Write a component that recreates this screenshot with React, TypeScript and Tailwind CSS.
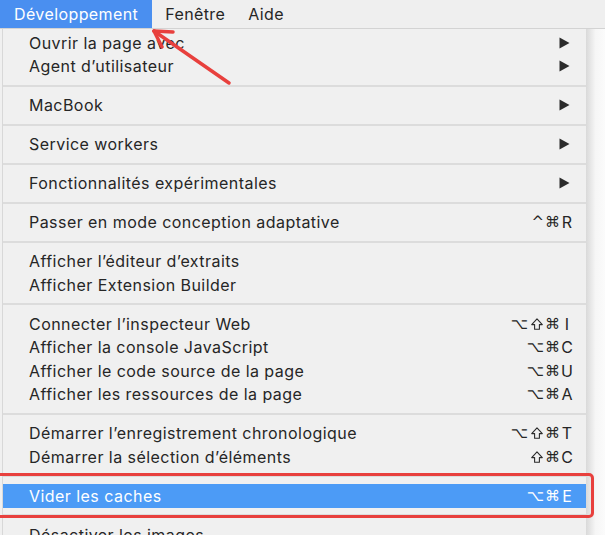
import React from "react";

type Item =
  | { type: "item"; label: string; mods?: string; keyc?: string; submenu?: boolean; active?: boolean }
  | { type: "sep" };

const items: Item[] = [
  { type: "item", label: "Ouvrir la page avec", submenu: true },
  { type: "item", label: "Agent d’utilisateur", submenu: true },
  { type: "sep" },
  { type: "item", label: "MacBook", submenu: true },
  { type: "sep" },
  { type: "item", label: "Service workers", submenu: true },
  { type: "sep" },
  { type: "item", label: "Fonctionnalités expérimentales", submenu: true },
  { type: "sep" },
  { type: "item", label: "Passer en mode conception adaptative", mods: "^⌘", keyc: "R" },
  { type: "sep" },
  { type: "item", label: "Afficher l’éditeur d’extraits" },
  { type: "item", label: "Afficher Extension Builder" },
  { type: "sep" },
  { type: "item", label: "Connecter l’inspecteur Web", mods: "⌥⇧⌘", keyc: "I" },
  { type: "item", label: "Afficher la console JavaScript", mods: "⌥⌘", keyc: "C" },
  { type: "item", label: "Afficher le code source de la page", mods: "⌥⌘", keyc: "U" },
  { type: "item", label: "Afficher les ressources de la page", mods: "⌥⌘", keyc: "A" },
  { type: "sep" },
  { type: "item", label: "Démarrer l’enregistrement chronologique", mods: "⌥⇧⌘", keyc: "T" },
  { type: "item", label: "Démarrer la sélection d’éléments", mods: "⇧⌘", keyc: "C" },
  { type: "sep" },
  { type: "item", label: "Vider les caches", mods: "⌥⌘", keyc: "E", active: true },
  { type: "sep" },
  { type: "item", label: "Désactiver les images" },
];

function Triangle() {
  return (
    <svg width="11" height="12" viewBox="0 0 11 12" className="block">
      <polygon points="0.5,0.5 10.5,6 0.5,11.5" fill="#2b2b2b" />
    </svg>
  );
}

function Shift({ color }: { color: string }) {
  return (
    <svg width="14" height="14" viewBox="0 0 14 14" className="mx-[1px] inline-block">
      <path
        d="M7 1.8 L12.3 7.6 H9.4 V12.3 H4.6 V7.6 H1.7 Z"
        fill="none"
        stroke={color}
        strokeWidth="1.1"
        strokeLinejoin="round"
      />
    </svg>
  );
}

function Shortcut({ mods, keyc, active }: { mods: string; keyc: string; active?: boolean }) {
  const color = active ? "#ffffff" : "#2a2a2a";
  return (
    <span
      className="flex items-center tracking-[1px]"
      style={{ fontFamily: "'DejaVu Sans', Inter, sans-serif", fontSize: "15px" }}
    >
      {mods.split("").map((m, i) =>
        m === "⇧" ? <Shift key={i} color={color} /> : <span key={i}>{m}</span>
      )}
      <span
        className="inline-block w-[12px] text-center tracking-normal"
        style={{ fontFamily: "Inter, sans-serif", fontSize: "16px" }}
      >
        {keyc}
      </span>
    </span>
  );
}

export default function App() {
  return (
    <div
      className="relative w-[605px] h-[535px] overflow-hidden bg-[#f0f0f0] text-[#262626]"
      style={{ fontFamily: "Inter, 'Noto Sans', sans-serif" }}
    >
      {/* Menu bar */}
      <div className="flex h-[29px] items-stretch border-b border-[#d3d3d3] bg-[#efefef] text-[16px] tracking-[0.4px]">
        <div className="flex items-center bg-[#4a8ff0] pl-[14px] pr-[14px] text-white">Développement</div>
        <div className="flex items-center pl-[13px] pr-[11px]">Fenêtre</div>
        <div className="flex items-center px-[12px]">Aide</div>
      </div>

      <div className="flex h-full">
        <div className="w-[2px] bg-[#f0f0f0]" />
        <div className="w-[584px] border-l border-[#d8d8d8] bg-[#f0f0f0] pt-[2px] text-[16px] tracking-[0.45px]">
          {items.map((it, i) =>
            it.type === "sep" ? (
              <div key={i} className="flex h-[15.5px] items-center">
                <div className="h-[2px] w-full bg-[#dcdcdc]" />
              </div>
            ) : (
              <div
                key={i}
                className={
                  "flex h-[23.5px] items-center justify-between pl-[26px] pr-[13px] " +
                  (it.active ? "bg-[#4c9bf6] text-white" : "")
                }
              >
                <span>{it.label}</span>
                {it.submenu ? (
                  <span className="pr-[3px]">
                    <Triangle />
                  </span>
                ) : it.mods && it.keyc ? (
                  <Shortcut mods={it.mods} keyc={it.keyc} active={it.active} />
                ) : null}
              </div>
            )
          )}
        </div>
        <div className="flex-1 bg-gradient-to-r from-[#d9d9d9] via-[#f6f6f6] to-[#fbfbfb]" />
      </div>

      {/* Red arrow */}
      <svg className="absolute left-0 top-0" width="605" height="120">
        <g stroke="#e8403d" strokeWidth="3.5" strokeLinecap="round" fill="none">
          <line x1="229" y1="83" x2="154" y2="31" />
          <line x1="154" y1="31" x2="173" y2="32" />
          <line x1="154" y1="31" x2="162" y2="47" />
        </g>
      </svg>

      {/* Red highlight box */}
      <div className="absolute left-[-6px] top-[473px] h-[45px] w-[600px] rounded-[5px] border-[3px] border-[#e8403d]" />
    </div>
  );
}
